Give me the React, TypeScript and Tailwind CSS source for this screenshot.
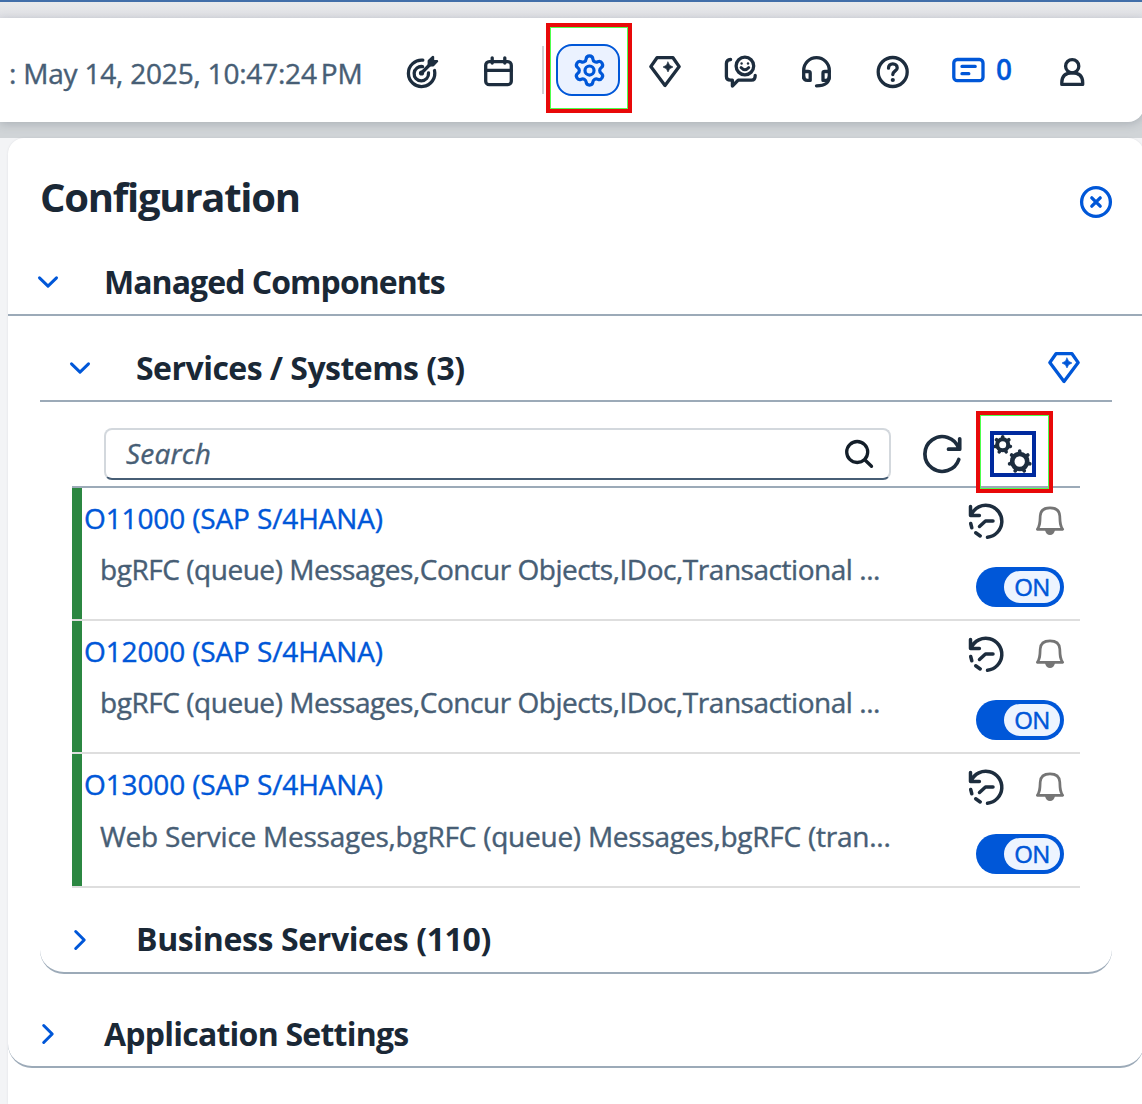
import type { ReactNode } from "react";

const INK = "#1d2d3e";
const BLUE = "#0057d8";

function Icon({ children, size = 36, color = INK, width = 3.3 }: { children: ReactNode; size?: number; color?: string; width?: number }) {
  return (
    <svg width={size} height={size} viewBox={`0 0 ${size} ${size}`} fill="none" stroke={color} strokeWidth={width} strokeLinecap="round" strokeLinejoin="round" className="block shrink-0">
      {children}
    </svg>
  );
}

function Target() {
  return (
    <Icon>
      <path d="M18.8 6.2A13.2 13.2 0 1 0 30.5 16.5" />
      <path d="M18.6 12.6A7.2 7.2 0 1 0 24.5 19" />
      <circle cx="17.5" cy="19" r="2.6" fill={INK} stroke="none" />
      <path d="M17.5 19L26 10.5" />
      <path d="M24.8 11.2V6.8L29 3V7.2H33L29.2 11.2Z" fill={INK} strokeWidth="2.4" />
    </Icon>
  );
}

function Calendar() {
  return (
    <Icon>
      <rect x="5.7" y="7.7" width="25.6" height="23" rx="3.5" />
      <path d="M5.7 16.4H31.3M12.2 3.8V9M24.8 3.8V9" />
    </Icon>
  );
}

function Gear() {
  return (
    <svg width="35" height="35" viewBox="0 0 24 24" fill="none" stroke={BLUE} strokeWidth="2.2" strokeLinecap="round" strokeLinejoin="round" className="block">
      <path d="M9.671 4.136a2.34 2.34 0 0 1 4.659 0 2.34 2.34 0 0 0 3.319 1.915 2.34 2.34 0 0 1 2.33 4.033 2.34 2.34 0 0 0 0 3.831 2.34 2.34 0 0 1-2.33 4.033 2.34 2.34 0 0 0-3.319 1.915 2.34 2.34 0 0 1-4.659 0 2.34 2.34 0 0 0-3.32-1.915 2.34 2.34 0 0 1-2.33-4.033 2.34 2.34 0 0 0 0-3.831A2.34 2.34 0 0 1 6.35 6.051a2.34 2.34 0 0 0 3.319-1.915" />
      <circle cx="12" cy="12" r="3.1" />
    </svg>
  );
}

function Diamond({ color = INK }: { color?: string }) {
  return (
    <Icon color={color}>
      <path d="M10 3.7H26L32.2 12.6L18 31.4L3.8 12.6Z" />
      <path d="M21 8L22.6 11.2L26 13L22.6 14.8L21 18L19.4 14.8L16 13L19.4 11.2Z" fill={color} strokeWidth="0.6" />
    </Icon>
  );
}

function Feedback() {
  return (
    <Icon>
      <path d="M7.6 5.5C4.6 5.5 3.4 7 3.4 9.5V22.5C3.4 25 4.6 26.2 7.6 26.2H9.4V32L15.2 26.2H28.6C31.2 26.2 32.2 24.8 32.2 21.5" />
      <circle cx="21.9" cy="12" r="8.8" />
      <circle cx="18.6" cy="9.5" r="1.2" fill={INK} stroke="none" />
      <circle cx="25" cy="9.5" r="1.2" fill={INK} stroke="none" />
      <path d="M18 13.5Q21.9 18 25.8 13.5" strokeWidth="2.8" />
    </Icon>
  );
}

function Headset() {
  return (
    <Icon>
      <path d="M4.7 24V16.5A12.8 12.8 0 0 1 30.3 16.5V22C30.3 29 26.5 31.8 17.5 31.8" />
      <path d="M5 17.5H9Q11.2 17.5 11.2 19V26.4H8.5Q4.8 26.4 4.8 23M30.3 17.5H26Q24 17.5 24 19V26.4H26.8Q30.3 26.4 30.3 23" />
    </Icon>
  );
}

function Help() {
  return (
    <Icon>
      <circle cx="17.7" cy="18" r="14.5" />
      <path d="M13.5 14.2C13.5 11.5 15.3 9.8 17.8 9.8C20.3 9.8 22.2 11.4 22.2 13.9C22.2 16.8 17.8 17 17.8 20.5" />
      <circle cx="17.8" cy="26" r="2.1" fill={INK} stroke="none" />
    </Icon>
  );
}

function Message() {
  return (
    <Icon color={BLUE}>
      <rect x="3.8" y="7.5" width="29.2" height="21.2" rx="3.5" />
      <path d="M12 14.4H25.2M12 21.7H18.8" />
    </Icon>
  );
}

function Person() {
  return (
    <Icon>
      <circle cx="17.2" cy="12.2" r="6.6" />
      <path d="M6.8 30.4V28.5C6.8 22 10.7 18.8 17.2 18.8S27.7 22 27.7 28.5V30.4Z" />
    </Icon>
  );
}

function Chevron({ open = false }: { open?: boolean }) {
  return (
    <Icon size={32} color={BLUE} width={3}>
      {open ? <path d="M7.5 11.9L16 20.1L24.5 11.9" /> : <path d="M11.7 7.5L20.2 16L11.7 24.5" />}
    </Icon>
  );
}

function Cog({ cx, cy, r, width, tooth }: { cx: number; cy: number; r: number; width: number; tooth: number }) {
  return (
    <g>
      <circle cx={cx} cy={cy} r={r} strokeWidth={width} />
      {[0, 1, 2, 3, 4, 5, 6].map((i) => (
        <path key={i} d={`M${cx} ${cy - r - 1}V${cy - r - tooth}`} strokeWidth="3.6" transform={`rotate(${(i * 360) / 7} ${cx} ${cy})`} />
      ))}
    </g>
  );
}

function Toggle() {
  return (
    <div className="flex h-10 w-[88px] justify-end rounded-full bg-[#0057d8] p-1">
      <div className="flex h-8 w-14 items-center justify-center rounded-full bg-[#edf4ff] pb-px text-[24px] leading-8 tracking-[-0.7px] text-[#0057d8] [-webkit-text-stroke:0.5px]">ON</div>
    </div>
  );
}

function SystemRow({ name, detail, last = false, detailClass }: { name: string; detail: string; last?: boolean; detailClass: string }) {
  return (
    <li className={`flex border-b-2 border-[#dedede] ${last ? "h-[134px]" : "h-[133px]"}`}>
      <div className="w-[10px] shrink-0 bg-[#2b8741]" />
      <div className="flex w-[820px] shrink-0 flex-col pt-[10px] text-[28px] leading-10 whitespace-nowrap [-webkit-text-stroke:0.4px]">
        <a className="pl-[2px] tracking-[-0.13px] text-[#0057d8]">{name}</a>
        <p className={`pl-[18px] text-[#475e75] ${last ? "mt-3" : "mt-[11px]"} ${detailClass}`}>{detail}</p>
      </div>
      <div className="flex flex-1 flex-col pl-16 pt-[14px]">
        <div className="flex gap-6">
          <Icon size={40} width={3.5}>
            <path d="M4.5 4.5V13.4H13.4M5.2 12.8A16 16 0 1 1 21.5 35.2" />
            <path d="M4.7 21.5L5.8 25.8M9.7 30.8L14.2 34" />
            <path d="M13.5 24.5L19.5 19H27" />
          </Icon>
          <Icon size={40} color="#757575" width={2.7}>
            <path d="M7.3 27.3C10 24 10 20.5 10.2 14C10.5 9 13.8 5.9 20 5.9S29.5 9 29.8 14C30 20.5 30 24 32.7 27.3Z" />
            <path d="M15 28H25C24.5 31 22.5 33 20 33S15.5 31 15 28Z" fill="#757575" stroke="none" />
          </Icon>
        </div>
        <div className={`ml-[10px] ${last ? "mt-[26px]" : "mt-[25px]"}`}>
          <Toggle />
        </div>
      </div>
    </li>
  );
}

function Highlight({ className }: { className: string }) {
  return (
    <div className={`pointer-events-none absolute border-4 border-[#e80909] ${className}`}>
      <div className="h-full w-full border border-[#4dff4d]" />
    </div>
  );
}

export default function App() {
  return (
    <div className="relative h-[1104px] w-[1142px] overflow-hidden bg-[#d0d4d7] font-['Open_Sans','Noto_Sans',sans-serif]">
      <div className="h-[18px] border-t-2 border-[#426fa9] bg-linear-to-b from-[#e9eaeb] to-[#dfe0e5]" />
      <header className="flex h-[104px] w-[1144px] rounded-br-2xl bg-white shadow-[0_2px_10px_rgba(85,95,110,0.3)]">
        <div className="w-[384px] shrink-0 pt-[35px] pl-[9px] text-[28px] leading-10 tracking-[-0.2px] whitespace-pre text-[#475e75] [-webkit-text-stroke:0.4px]">: May 14, 2025, 10:47:24<span className="ml-[4px]">PM</span></div>
        <div className="flex w-[76px] shrink-0 justify-center pt-9"><Target /></div>
        <div className="flex w-[76px] shrink-0 justify-center pt-9"><Calendar /></div>
        <div className="flex w-[91px] shrink-0 pl-[6px]">
          <div className="mt-7 h-12 w-[2px] bg-[#d0d2d5]" />
          <button className="mt-[26px] ml-[12px] flex h-[52px] w-16 items-center justify-center rounded-[16px] border-2 border-[#0057d8] bg-[#ebf2ff] pl-[3px]"><Gear /></button>
        </div>
        <div className="flex w-[76px] shrink-0 justify-center pt-9"><Diamond /></div>
        <div className="flex w-[76px] shrink-0 justify-center pt-9"><Feedback /></div>
        <div className="flex w-[76px] shrink-0 justify-center pt-9"><Headset /></div>
        <div className="flex w-[76px] shrink-0 justify-center pt-9"><Help /></div>
        <div className="flex w-[104px] shrink-0 gap-[10px] pt-[34px] pl-[19px] text-[28px] leading-[34px] font-semibold text-[#0057d8] [-webkit-text-stroke:0.3px]"><Message /><span>0</span></div>
        <div className="flex w-[76px] shrink-0 justify-center pt-9"><Person /></div>
      </header>

      <div className="mt-4 h-[966px] bg-[#f3f4f6] pl-2">
        <main className="h-full w-[1136px] rounded-t-2xl bg-white text-[#1a2836] shadow-[0_0_2px_rgba(85,95,110,0.15)]">
          <div className="flex h-28 justify-between pl-8">
            <h1 className="pt-[31px] text-[40px] leading-[56px] font-bold tracking-[-1.25px]">Configuration</h1>
            <button className="mt-[46px] mr-[30px] h-9 w-9">
              <Icon color={BLUE}>
                <circle cx="18" cy="18" r="14.4" />
                <path d="M13.8 13.8L22.2 22.2M22.2 13.8L13.8 22.2" />
              </Icon>
            </button>
          </div>

          <div className="flex h-[66px] items-center gap-10 border-b-2 border-[#9caab8] pl-6 text-[32px]">
            <Chevron open />
            <h2 className="font-bold tracking-[-0.95px]">Managed Components</h2>
          </div>

          <section className="mx-8 h-[658px] rounded-b-[24px] border-b-2 border-[#9caab8]">
            <div className="flex h-[86px] items-center border-b-2 border-[#9caab8] pt-[20px] pl-6 text-[32px]">
              <Chevron open />
              <h3 className="ml-10 flex-1 font-bold tracking-[-0.53px]">Services / Systems (3)</h3>
              <div className="mr-[30px]"><Diamond color={BLUE} /></div>
            </div>

            <div className="mx-8 flex h-[86px] border-b-2 border-[#9caab8] pt-[26px] pl-8">
              <div className="flex h-[52px] w-[787px] items-center justify-between rounded-lg border-2 border-[#d3d8dd] border-b-[#475e75] pr-3 pb-[3px] pl-5">
                <span className="text-[28px] tracking-[0.2px] text-[#475e75] italic [-webkit-text-stroke:0.4px]">Search</span>
                <div className="pt-[3px]">
                  <Icon color="#131e29">
                    <circle cx="16.2" cy="16" r="10.5" />
                    <path d="M24 24L30.5 30.3" />
                  </Icon>
                </div>
              </div>
              <div className="ml-[29px] pt-[2px]">
                <Icon size={46} width={3.7}>
                  <path d="M39.7 8.8V19.2H28.5M38.8 18.5A17.4 17.4 0 1 0 38.8 29.5" />
                </Icon>
              </div>
              <div className="mt-[3px] ml-6 h-[46px] w-[46px] border-4 border-[#002a9e]">
                <Icon size={38}>
                  <Cog cx={8.7} cy={9.7} r={5.5} width={4} tooth={2.4} />
                  <Cog cx={25.7} cy={26.5} r={7.5} width={4.6} tooth={2.9} />
                </Icon>
              </div>
            </div>

            <ul className="mx-8">
              <SystemRow name="O11000 (SAP S/4HANA)" detail="bgRFC (queue) Messages,Concur Objects,IDoc,Transactional ..." detailClass="tracking-[-0.46px]" />
              <SystemRow name="O12000 (SAP S/4HANA)" detail="bgRFC (queue) Messages,Concur Objects,IDoc,Transactional ..." detailClass="tracking-[-0.46px]" />
              <SystemRow name="O13000 (SAP S/4HANA)" detail="Web Service Messages,bgRFC (queue) Messages,bgRFC (tran..." detailClass="tracking-[-0.24px]" last />
            </ul>

            <div className="flex h-[84px] items-center gap-10 pt-5 pl-6 text-[32px]">
              <Chevron />
              <h3 className="-mt-[2px] font-bold tracking-[-0.37px]">Business Services (110)</h3>
            </div>
          </section>

          <div className="flex h-[94px] items-center gap-10 rounded-b-[24px] border-b-2 border-[#9caab8] pt-[28px] pl-6 text-[32px]">
            <Chevron />
            <h2 className="font-bold tracking-[-0.77px]">Application Settings</h2>
          </div>
        </main>
      </div>

      <Highlight className="top-[23px] left-[546px] h-[90px] w-[86px]" />
      <Highlight className="top-[411px] left-[976px] h-[82px] w-[77px]" />
    </div>
  );
}
